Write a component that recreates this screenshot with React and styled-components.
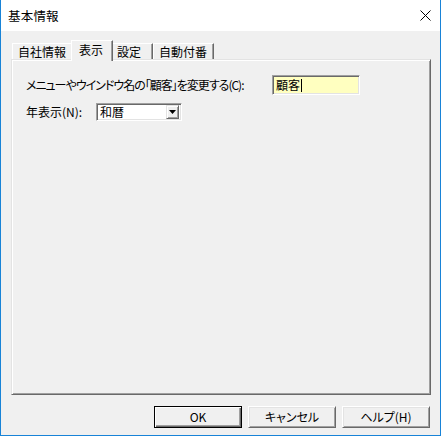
import React from 'react'
import styled, { createGlobalStyle } from 'styled-components'

const GlobalStyle = createGlobalStyle`
    html, body {
        margin: 0;
        padding: 0;
        background: #ffffff;
    }
    body {
        font-family: "Noto Sans CJK JP", "Noto Sans", sans-serif;
        font-size: 12px;
        color: #000;
    }
`

const TABS = ['自社情報', '表示', '設定', '自動付番']

const CloseIcon = () => (
    <svg width="11" height="11" viewBox="0 0 11 11">
        <path d="M0.5 0.5 L10.5 10.5 M10.5 0.5 L0.5 10.5" stroke="#000" strokeWidth="1" fill="none" />
    </svg>
)

const ArrowIcon = () => (
    <svg width="7" height="4" viewBox="0 0 7 4">
        <path d="M0 0 H7 L3.5 4 Z" fill="#000" />
    </svg>
)

const App = () => (
    <>
        <GlobalStyle />
        <Window>
            <TitleBar>
                <Title>基本情報</Title>
                <CloseButton>
                    <CloseIcon />
                </CloseButton>
            </TitleBar>
            <Body>
                <TabStrip>
                    {TABS.map((tab) => (
                        <Tab key={tab} $active={tab === '表示'} $narrow={tab.length < 3}>
                            {tab}
                        </Tab>
                    ))}
                </TabStrip>
                <Panel>
                    <Row>
                        <Label $width={246} $tight>
                            メニューやウインドウ名の「顧客」を変更する(C):
                        </Label>
                        <Edit>
                            顧客
                            <Caret />
                        </Edit>
                    </Row>
                    <Row>
                        <Label $width={70}>年表示(N):</Label>
                        <Combo>
                            <ComboText>和暦</ComboText>
                            <ComboButton>
                                <ArrowIcon />
                            </ComboButton>
                        </Combo>
                    </Row>
                </Panel>
                <ButtonRow>
                    <Button $default>OK</Button>
                    <Button>キャンセル</Button>
                    <Button>ヘルプ(H)</Button>
                </ButtonRow>
            </Body>
        </Window>
    </>
)
export default App

const Window = styled.div`
    width: 441px;
    height: 436px;
    box-sizing: border-box;
    border: 1px solid #1883d7;
    border-top: none;
    background: #f0f0f0;
    display: flex;
    flex-direction: column;
`

const TitleBar = styled.div`
    height: 31px;
    flex-shrink: 0;
    background: #ffffff;
    display: flex;
    align-items: center;
    justify-content: space-between;
    padding: 0 9px 0 7px;
`

const Title = styled.div`
    font-size: 12.5px;
    letter-spacing: 0.2px;
    line-height: 1;
    margin-top: 1px;
`

const CloseButton = styled.div`
    display: flex;
    align-items: center;
`

const Body = styled.div`
    flex: 1;
    display: flex;
    flex-direction: column;
    padding: 9px 9px 7px 10px;
    min-height: 0;
`

const TabStrip = styled.div`
    display: flex;
    align-items: flex-end;
    height: 21px;
    margin-bottom: -2px;
    padding-left: 1px;
    position: relative;
    z-index: 1;
`

const Tab = styled.div`
    box-sizing: border-box;
    height: ${(p) => (p.$active ? '21px' : '16px')};
    margin: ${(p) => (p.$active ? '0 -2px' : '0 0 2px 0')};
    min-width: ${(p) => (p.$narrow ? '42px' : '0')};
    padding: ${(p) => (p.$active ? '1px 8px 0 7px' : '0 6px 0 5px')};
    background: #f0f0f0;
    border: 1px solid;
    border-color: #ffffff #696969 transparent #ffffff;
    border-bottom: none;
    box-shadow: inset -1px 0 #a0a0a0;
    line-height: 15px;
    white-space: nowrap;
    position: relative;
    z-index: ${(p) => (p.$active ? 2 : 0)};
`

const Panel = styled.div`
    flex: 1;
    box-sizing: border-box;
    border: 1px solid;
    border-color: #e3e3e3 #696969 #696969 #e3e3e3;
    box-shadow: inset 1px 1px #ffffff, inset -1px -1px #a0a0a0;
    padding: 15px 14px;
    display: flex;
    flex-direction: column;
    gap: 8px;
`

const Row = styled.div`
    display: flex;
    align-items: center;
`

const Label = styled.div`
    width: ${(p) => p.$width}px;
    flex-shrink: 0;
    font-feature-settings: "palt";
    letter-spacing: ${(p) => (p.$tight ? '-1px' : '0')};
    white-space: nowrap;
    line-height: 14px;
`

const Edit = styled.div`
    box-sizing: border-box;
    width: 88px;
    height: 20px;
    background: #ffffc0;
    border: 1px solid;
    border-color: #a0a0a0 #ffffff #ffffff #a0a0a0;
    box-shadow: inset 1px 1px #696969, inset -1px -1px #e3e3e3;
    padding: 0 3px;
    display: flex;
    align-items: center;
    line-height: 14px;
`

const Caret = styled.span`
    display: inline-block;
    width: 1px;
    height: 13px;
    background: #000;
    margin-left: 1px;
`

const Combo = styled.div`
    box-sizing: border-box;
    width: 86px;
    height: 18px;
    background: #ffffff;
    border: 1px solid;
    border-color: #a0a0a0 #ffffff #ffffff #a0a0a0;
    box-shadow: inset 1px 1px #696969, inset -1px -1px #e3e3e3;
    padding: 2px 2px 2px 3px;
    display: flex;
    align-items: center;
    justify-content: space-between;
`

const ComboText = styled.span`
    line-height: 14px;
`

const ComboButton = styled.div`
    box-sizing: border-box;
    width: 13px;
    height: 14px;
    background: #f0f0f0;
    border: 1px solid;
    border-color: #e3e3e3 #696969 #696969 #e3e3e3;
    box-shadow: inset 1px 1px #ffffff, inset -1px -1px #a0a0a0;
    display: flex;
    align-items: center;
    justify-content: center;
`

const ButtonRow = styled.div`
    display: flex;
    justify-content: flex-end;
    gap: 6px;
    margin-top: 11px;
    padding-right: 1px;
`

const Button = styled.div`
    box-sizing: border-box;
    width: 88px;
    height: 22px;
    background: #f0f0f0;
    border: 1px solid;
    border-color: ${(p) => (p.$default ? '#000 #000 #000 #000' : '#ffffff #696969 #696969 #ffffff')};
    box-shadow: ${(p) =>
        p.$default
            ? 'inset 1px 1px #ffffff, inset -1px -1px #696969, inset -2px -2px #a0a0a0'
            : 'inset 1px 1px #e3e3e3, inset -1px -1px #a0a0a0'};
    display: flex;
    align-items: center;
    justify-content: center;
    font-feature-settings: "palt";
    line-height: 14px;
`
